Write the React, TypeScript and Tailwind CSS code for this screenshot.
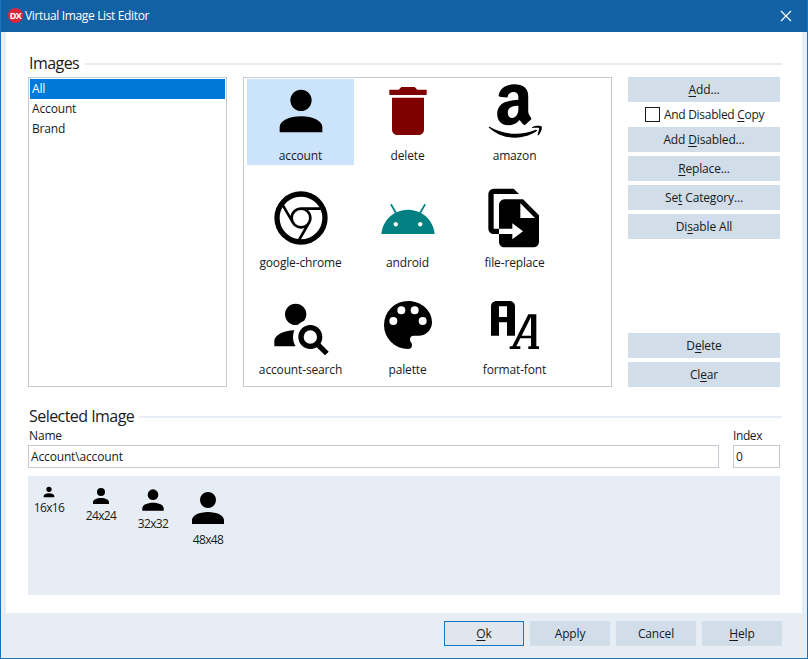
import type { ReactNode } from "react";

const ACCOUNT =
  "M12,4A4,4 0 0,1 16,8A4,4 0 0,1 12,12A4,4 0 0,1 8,8A4,4 0 0,1 12,4M12,14C16.42,14 20,15.79 20,18V20H4V18C4,15.79 7.58,14 12,14Z";

const IMAGES = [
  { name: "account", color: "#000000", d: ACCOUNT },
  {
    name: "delete",
    color: "#800000",
    d: "M19,4H15.5L14.5,3H9.5L8.5,4H5V6H19M6,19A2,2 0 0,0 8,21H16A2,2 0 0,0 18,19V7H6V19Z",
  },
  {
    name: "amazon",
    color: "#000000",
    d: "M15.93,17.09C15.75,17.25 15.5,17.26 15.3,17.15C14.41,16.41 14.25,16.07 13.76,15.36C12.29,16.86 11.25,17.31 9.34,17.31C7.09,17.31 5.33,15.92 5.33,13.14C5.33,10.96 6.5,9.5 8.19,8.76C9.65,8.12 11.7,8 13.26,7.82V7.47C13.26,6.83 13.31,6.08 12.93,5.53C12.6,5.04 12,4.84 11.46,4.84C10.44,4.84 9.54,5.36 9.32,6.43C9.27,6.67 9.1,6.91 8.86,6.92L6.27,6.64C6.05,6.59 5.81,6.42 5.87,6.08C6.47,2.95 9.28,2 11.8,2C13.09,2 14.78,2.34 15.79,3.31C17.08,4.5 16.96,6.11 16.96,7.87V12.03C16.96,13.28 17.5,13.83 18,14.5C18.14,14.73 18.18,15 18,15.17L15.94,17.09H15.93M13.26,10.56V10C11.33,10 9.3,10.39 9.3,12.67C9.3,13.83 9.9,14.61 10.92,14.61C11.67,14.61 12.34,14.15 12.77,13.4C13.29,12.47 13.26,11.6 13.26,10.56M20.16,19.54C18,21.14 14.82,22 12.1,22C8.29,22 4.85,20.59 2.25,18.24C2.05,18.06 2.23,17.81 2.5,17.95C5.28,19.58 8.75,20.56 12.33,20.56C14.74,20.56 17.4,20.06 19.84,19.03C20.21,18.87 20.5,19.27 20.16,19.54M21.07,18.5C20.79,18.14 19.22,18.33 18.5,18.42C18.31,18.44 18.28,18.26 18.47,18.14C19.71,17.27 21.76,17.5 22,17.79C22.24,18.09 21.93,20.14 20.76,21.11C20.58,21.27 20.41,21.18 20.5,21L21.07,18.5Z",
  },
  {
    name: "google-chrome",
    color: "#000000",
    d: "M12,20L15.46,14H15.45C15.79,13.4 16,12.73 16,12C16,10.8 15.46,9.73 14.62,9H19.41C19.79,9.93 20,10.94 20,12A8,8 0 0,1 12,20M4,12C4,10.54 4.39,9.18 5.07,8L8.54,14H8.55C9.24,15.19 10.52,16 12,16C12.45,16 12.88,15.91 13.29,15.77L10.89,19.91C7,19.37 4,16.04 4,12M15,12A3,3 0 0,1 12,15A3,3 0 0,1 9,12A3,3 0 0,1 12,9A3,3 0 0,1 15,12M12,4C14.96,4 17.54,5.61 18.92,8H12C10.06,8 8.45,9.38 8.08,11.21L5.7,7.08C7.16,5.21 9.44,4 12,4M12,2A10,10 0 0,0 2,12A10,10 0 0,0 12,22A10,10 0 0,0 22,12A10,10 0 0,0 12,2Z",
  },
  {
    name: "android",
    color: "#008080",
    d: "M16.61 15.15C16.15 15.15 15.77 14.78 15.77 14.32S16.15 13.5 16.61 13.5H16.61C17.07 13.5 17.45 13.86 17.45 14.32C17.45 14.78 17.07 15.15 16.61 15.15M7.41 15.15C6.95 15.15 6.57 14.78 6.57 14.32C6.57 13.86 6.95 13.5 7.41 13.5H7.41C7.87 13.5 8.24 13.86 8.24 14.32C8.24 14.78 7.87 15.15 7.41 15.15M16.91 10.14L18.58 7.26C18.67 7.09 18.61 6.88 18.45 6.79C18.28 6.69 18.07 6.75 18 6.92L16.29 9.83C14.95 9.22 13.5 8.9 12 8.91C10.47 8.91 9 9.24 7.73 9.82L6.04 6.91C5.95 6.74 5.74 6.68 5.57 6.78C5.4 6.87 5.35 7.08 5.44 7.25L7.1 10.13C4.25 11.69 2.29 14.58 2 18H22C21.72 14.59 19.77 11.7 16.91 10.14H16.91Z",
  },
  {
    name: "file-replace",
    color: "#000000",
    d: "M14,12H19.5L14,6.5V12M8,5H15L21,11V21A2,2 0 0,1 19,23H8C6.89,23 6,22.1 6,21V18H11V20L15,17L11,14V16H6V7A2,2 0 0,1 8,5M13.5,3H4V16H6V18H4A2,2 0 0,1 2,16V3A2,2 0 0,1 4,1H11.5L13.5,3Z",
  },
  {
    name: "account-search",
    color: "#000000",
    d: "M15.5,12C18,12 20,14 20,16.5C20,17.38 19.75,18.21 19.31,18.9L22.39,22L21,23.39L17.88,20.32C17.19,20.75 16.37,21 15.5,21C13,21 11,19 11,16.5C11,14 13,12 15.5,12M15.5,14A2.5,2.5 0 0,0 13,16.5A2.5,2.5 0 0,0 15.5,19A2.5,2.5 0 0,0 18,16.5A2.5,2.5 0 0,0 15.5,14M10,4A4,4 0 0,1 14,8C14,8.91 13.69,9.75 13.18,10.43C12.32,10.75 11.55,11.26 10.91,11.9L10,12A4,4 0 0,1 6,8A4,4 0 0,1 10,4M2,20V18C2,15.88 5.31,14.14 9.5,14C9.18,14.78 9,15.62 9,16.5C9,17.79 9.38,19 10,20H2Z",
  },
  {
    name: "palette",
    color: "#000000",
    d: "M17.5,12A1.5,1.5 0 0,1 16,10.5A1.5,1.5 0 0,1 17.5,9A1.5,1.5 0 0,1 19,10.5A1.5,1.5 0 0,1 17.5,12M14.5,8A1.5,1.5 0 0,1 13,6.5A1.5,1.5 0 0,1 14.5,5A1.5,1.5 0 0,1 16,6.5A1.5,1.5 0 0,1 14.5,8M9.5,8A1.5,1.5 0 0,1 8,6.5A1.5,1.5 0 0,1 9.5,5A1.5,1.5 0 0,1 11,6.5A1.5,1.5 0 0,1 9.5,8M6.5,12A1.5,1.5 0 0,1 5,10.5A1.5,1.5 0 0,1 6.5,9A1.5,1.5 0 0,1 8,10.5A1.5,1.5 0 0,1 6.5,12M12,3A9,9 0 0,0 3,12A9,9 0 0,0 12,21A1.5,1.5 0 0,0 13.5,19.5C13.5,19.11 13.35,18.76 13.11,18.5C12.88,18.23 12.73,17.88 12.73,17.5A1.5,1.5 0 0,1 14.23,16H16A5,5 0 0,0 21,11C21,6.58 16.97,3 12,3Z",
  },
  {
    name: "format-font",
    color: "#000000",
    d: "M17,8H20V20H21V21H17V20H18V17H14L12.5,20H14V21H10V20H11L17,8M18,9L14.5,16H18V9M5,3H10C11.11,3 12,3.89 12,5V16H9V11H6V16H3V5C3,3.89 3.89,3 5,3M6,5V9H9V5H6Z",
  },
];

const PREVIEWS = [16, 24, 32, 48];

function Icon({ d, size, color = "#000000" }: { d: string; size: number; color?: string }) {
  return (
    <svg width={size} height={size} viewBox="0 0 24 24" fill={color} className="shrink-0">
      <path d={d} />
    </svg>
  );
}

function Key({ children }: { children: ReactNode }) {
  return <span className="underline underline-offset-2">{children}</span>;
}

function Btn({ children }: { children: ReactNode }) {
  return (
    <div className="flex h-[25px] w-[152px] items-center justify-center bg-[#d1dde9] text-[#1a1a1a]">
      <span>{children}</span>
    </div>
  );
}

function SectionTitle({ title }: { title: string }) {
  return (
    <div className="-mr-[2px] flex h-[22px] items-center gap-[5px] pl-px">
      <span className="-translate-y-px text-[16px] leading-[22px] tracking-[-0.55px] text-[#1a1a1a]">{title}</span>
      <div className="h-[2px] flex-1 bg-[#e6edf4]" />
    </div>
  );
}

export default function App() {
  return (
    <div
      className="flex h-[659px] w-[808px] flex-col overflow-hidden border border-t-0 border-[#1a74bd] bg-[#e6edf4] text-[12px] leading-4 tracking-[-0.15px] text-[#1a1a1a]"
      style={{ fontFamily: '"Open Sans", "Noto Sans", sans-serif' }}
    >
      <div className="flex h-[32px] shrink-0 items-center bg-[#1361a5] pl-[7px] pr-[15px] text-white">
        <div className="-mt-[2px] flex h-[15px] w-[15px] items-center justify-center rounded-full bg-[#e0243c] text-[9px] font-bold leading-none tracking-[-0.5px]">
          DX
        </div>
        <span className="ml-[2px] flex-1 tracking-[-0.35px]">Virtual Image List Editor</span>
        <svg width="12" height="12" viewBox="0 0 12 12" stroke="white" strokeWidth="1.2">
          <path d="M1 1L11 11M11 1L1 11" />
        </svg>
      </div>

      <div className="mx-[5px] flex flex-1 flex-col bg-white px-[22px] pt-[21px]">
        <SectionTitle title="Images" />
        <div className="mt-[2px] flex h-[310px] gap-4">
          <div className="w-[199px] border border-[#c3ccd5] p-px">
            <div className="flex h-5 items-center bg-[#0078d7] px-[2px] text-white">All</div>
            <div className="flex h-5 items-center px-[2px]">Account</div>
            <div className="flex h-5 items-center px-[2px]">Brand</div>
          </div>

          <div className="grid w-[369px] grid-cols-[107px_107px_107px] grid-rows-[107px_107px_94px] border border-[#c3ccd5] pl-[3px] pt-px">
            {IMAGES.map((img, i) => (
              <div
                key={img.name}
                className={
                  i === 0
                    ? "flex h-[86px] flex-col items-center bg-[#cce4fb]"
                    : "flex h-[86px] flex-col items-center"
                }
              >
                <Icon d={img.d} size={64} color={img.color} />
                <span className="mt-[5px]">{img.name}</span>
              </div>
            ))}
          </div>

          <div className="flex w-[152px] flex-col">
            <Btn>
              <Key>A</Key>dd...
            </Btn>
            <div className="flex h-[25px] items-center pl-[17px]">
              <div className="h-[15px] w-[15px] border border-[#1a1a1a] bg-white" />
              <span className="ml-1 tracking-[-0.3px]">
                And Disabled <Key>C</Key>opy
              </span>
            </div>
            <Btn>
              Add <Key>D</Key>isabled...
            </Btn>
            <div className="mt-1 flex flex-col gap-1">
              <Btn>
                <Key>R</Key>eplace...
              </Btn>
              <Btn>
                Se<Key>t</Key> Category...
              </Btn>
              <Btn>
                Di<Key>s</Key>able All
              </Btn>
            </div>
            <div className="mt-auto flex flex-col gap-1">
              <Btn>
                D<Key>e</Key>lete
              </Btn>
              <Btn>
                Cl<Key>e</Key>ar
              </Btn>
            </div>
          </div>
        </div>

        <div className="mt-[19px]">
          <SectionTitle title="Selected Image" />
        </div>
        <div className="flex gap-[14px]">
          <div className="flex flex-1 flex-col">
            <span className="mb-px pl-px">Name</span>
            <div className="flex h-[23px] items-center border border-[#c3ccd5] px-[2px]">Account\account</div>
          </div>
          <div className="flex w-[47px] flex-col">
            <span className="mb-px tracking-[-0.4px]">Index</span>
            <div className="flex h-[23px] items-center border border-[#c3ccd5] px-[2px]">0</div>
          </div>
        </div>

        <div className="mt-2 flex h-[119px] items-start gap-[10px] bg-[#e6edf4] pt-2">
          {PREVIEWS.map((size) => (
            <div key={size} className={size === 48 ? "flex w-12 flex-col items-center" : "flex w-[42px] flex-col items-center"}>
              <Icon d={ACCOUNT} size={size} />
              <span className="tracking-[-0.6px]">
                {size}x{size}
              </span>
            </div>
          ))}
        </div>
      </div>

      <div className="flex h-[45px] shrink-0 justify-end gap-[6px] pr-[25px] pt-2">
        <div className="flex h-[25px] w-20 items-center justify-center border border-[#1878be] bg-[#dfe6ee]">
          <span>
            <Key>O</Key>k
          </span>
        </div>
        {["Apply", "Cancel"].map((label) => (
          <div key={label} className="flex h-[25px] w-20 items-center justify-center bg-[#d1dde9]">
            {label}
          </div>
        ))}
        <div className="flex h-[25px] w-20 items-center justify-center bg-[#d1dde9]">
          <span>
            <Key>H</Key>elp
          </span>
        </div>
      </div>
    </div>
  );
}
